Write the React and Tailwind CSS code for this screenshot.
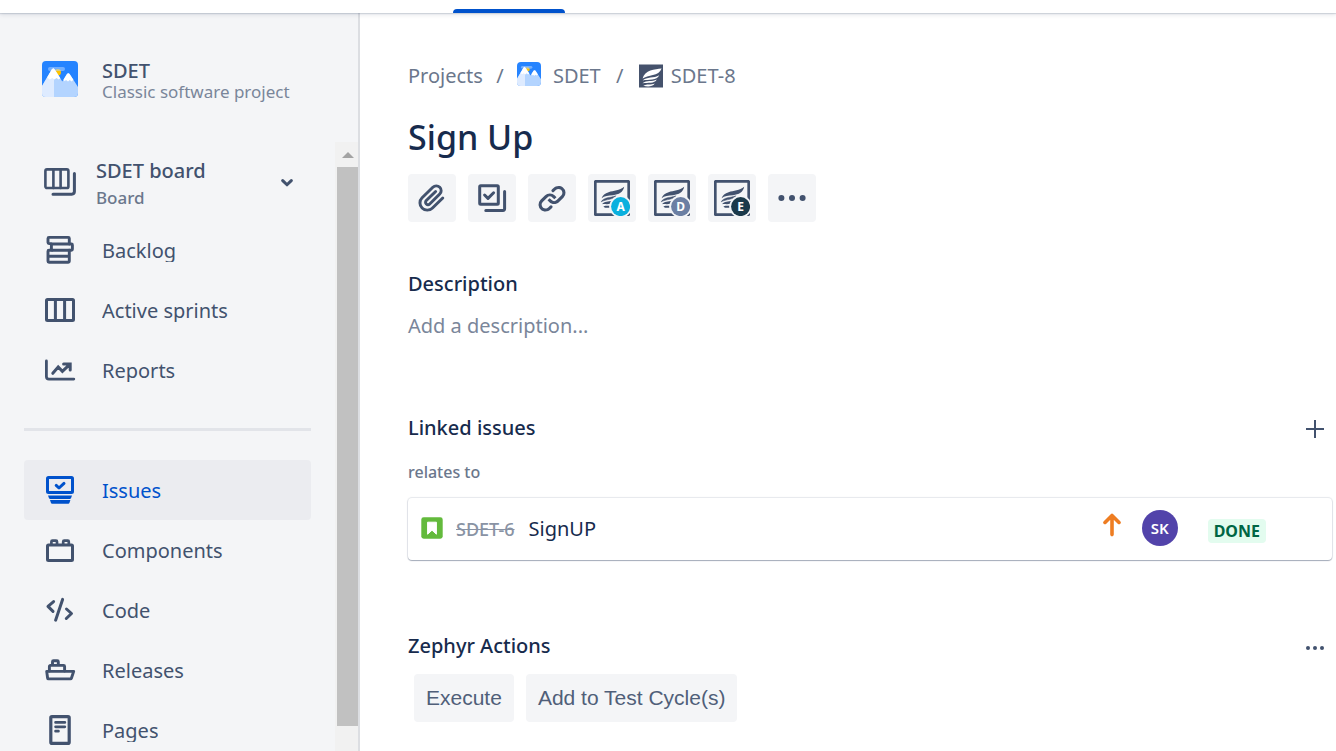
import React from "react";

const strokeProps = {
  fill: "none",
  stroke: "currentColor",
  strokeWidth: 3,
  strokeLinecap: "round",
  strokeLinejoin: "round",
};

function Icon({ children, className = "size-9" }) {
  return (
    <svg viewBox="0 0 36 36" className={`shrink-0 ${className}`} aria-hidden="true" {...strokeProps}>
      {children}
    </svg>
  );
}

function ProjectLogo({ className }) {
  return (
    <svg viewBox="0 0 36 36" className={`shrink-0 ${className}`} aria-hidden="true">
      <rect width="36" height="36" fill="#2684ff" />
      <circle cx="15.8" cy="11.2" r="3.2" fill="#ffc400" />
      <rect x="6" y="6" width="17" height="4" rx="2" fill="#b3d4ff" opacity=".55" />
      <path d="M0 25 9.8 8.6Q11.3 6.4 12.8 8.6L20.3 20.4 24.8 13.2Q26.3 11.2 27.8 13.2L36 26V36H0Z" fill="#b3d4ff" />
      <path d="M0 25 9.8 8.6Q10.5 7.5 12 7.2V36H0Z" fill="#deebff" />
      <path d="M5.2 16.4 9.8 8.6Q11.3 6.4 12.8 8.6L18.4 17.2 16.6 18.6 14.6 17 12.4 18.6 10.2 17 7.8 18.4Z" fill="#fff" />
      <path d="M21.6 18.4 24.8 13.2Q26.3 11.2 27.8 13.2L31.4 18.8 29.6 20.4 27.8 19 26 20.6 24 19 22.6 20.2Z" fill="#fff" />
    </svg>
  );
}

function ZephyrTypeIcon() {
  return (
    <svg viewBox="0 0 24 24" className="size-6 shrink-0" aria-hidden="true">
      <rect y="0.5" width="24" height="23" fill="#45526c" />
      <path d="M22.6 4.4C16 5.4 5.6 5.6 3.6 14.600 8.400 10.600 20 12.400 22.600 4.400Z" fill="#fff" />
      <path d="M3.6 16.400c4-4 11.400-1.800 16.600-5.200-2.200 5.400-10.600 4-16.600 5.200Z" fill="#fff" />
      <path d="M3.400 19.200c4.400-3 9.600-1.200 14.400-3.600-2.400 4.400-8.600 3-14.400 3.600Z" fill="#fff" />
      <path d="M4.200 21.800c3.800-2.200 7.600-.8 11.600-2.400-2.400 3.600-7.200 3.400-11.600 2.400Z" fill="#fff" />
    </svg>
  );
}

function ZephyrBadgeIcon({ letter, color }) {
  return (
    <svg viewBox="0 0 36 36" className="size-9 shrink-0" aria-hidden="true">
      <rect x="1.3" y="1.3" width="33.400" height="33.400" rx="0.6" fill="none" stroke="#42526e" strokeWidth="2.700" />
      <path d="M30.200 6.800C25.600 11 19.600 10.400 14.600 12.200 11 13.400 8.600 15.200 7.600 18.200 10.400 15.800 14.400 15.600 19 15.200 25 14.600 29 12.400 30.200 6.800Z" fill="#42526e" />
      <path d="M7.200 21.800c2.600-4.600 8.600-3.800 14.800-6-2 3.800-9.400 3.200-14.800 6Z" fill="#42526e" stroke="#42526e" strokeWidth=".5" />
      <path d="M8 24.200c2.400-2.800 6-2.600 10.400-3.400l-2.400 3c-2.800.8-5.400 0-8 .4Z" fill="#42526e" />
      <path d="M9.400 26.400c1.800-.8 4-.6 6-.6v1.900c-2.200.2-4.600.3-6-1.300Z" fill="#42526e" />
      <circle cx="26.600" cy="26.600" r="11.200" fill="#f4f5f7" />
      <circle cx="26.600" cy="26.600" r="9.500" fill={color} />
      <text x="26.600" y="30.800" textAnchor="middle" fontSize="12" fontWeight="700" fill="#fff" fontFamily="Noto Sans, sans-serif">
        {letter}
      </text>
    </svg>
  );
}

const icons = {
  board: (
    <Icon>
      <g strokeWidth="2.6">
        <rect x="3.4" y="5.4" width="23" height="18.6" rx="1.6" />
        <path d="M11.4 6v18M18.6 6v18" />
      </g>
      <path d="M11 30.2h18.8a2.6 2.6 0 0 0 2.6-2.6V9.6" strokeWidth="3" />
    </Icon>
  ),
  backlog: (
    <Icon>
      <g strokeWidth="2.9">
        <path d="M9 11.6H7a1 1 0 0 1-1-1V6.4a1 1 0 0 1 1-1h19.300a1 1 0 0 1 1 1V12" />
        <rect x="9.4" y="12" width="21" height="6.300" rx="1" />
        <path d="M10 18.300H7a1 1 0 0 0-1 1v10a1 1 0 0 0 1 1h19.300a1 1 0 0 0 1-1v-11M6 24.200h21" />
      </g>
    </Icon>
  ),
  sprints: (
    <Icon>
      <rect x="4.500" y="7.500" width="27" height="21" rx="1" />
      <path d="M13.400 8v20M22.600 8v20" />
    </Icon>
  ),
  reports: (
    <Icon>
      <path d="M4.400 9v15.500a2.600 2.600 0 0 0 2.600 2.600h24.800" strokeWidth="2.800" />
      <path d="M10.800 21.300 16.200 15l4.200 4.400 7.400-7M21.600 11.900h6.600v6" strokeLinejoin="miter" />
    </Icon>
  ),
  issues: (
    <Icon>
      <rect x="5.500" y="5.500" width="25" height="15" rx="1" />
      <path d="M14.200 13.400 17 16l5-4.600" />
      <path d="M6 23.600h24l-1 2.600q-.4.700-1.200.7H8.200q-.8 0-1.200-.7ZM8 28.100h20.400l-1 2.900q-.3.700-1 .7H10q-.7 0-1-.7Z" fill="currentColor" stroke="none" />
    </Icon>
  ),
  components: (
    <Icon>
      <rect x="5.500" y="13" width="25" height="15.600" rx="1" />
      <path d="M9.400 12.500V9.700a1 1 0 0 1 1-1h3.600a1 1 0 0 1 1 1v2.800M21.200 12.500V9.700a1 1 0 0 1 1-1h3.600a1 1 0 0 1 1 1v2.800" strokeWidth="2.700" />
    </Icon>
  ),
  code: (
    <Icon>
      <path d="M11.600 9.600 6 14.400l5 5M20.600 7.400 13.600 28.200M24.500 17l5 4.500-5.200 5" />
    </Icon>
  ),
  releases: (
    <Icon>
      <path d="M4.700 19.400h27l-2.300 6.800a1 1 0 0 1-1 .7H6.600a1 1 0 0 1-1-.9Z" strokeWidth="2.900" />
      <path d="M7.400 19v-4.600a1 1 0 0 1 1-1h13.200a1 1 0 0 1 1 1V19M10.500 13V9.700a1 1 0 0 1 1-1h3.800a1 1 0 0 1 1 1V13" strokeWidth="2.900" />
    </Icon>
  ),
  pages: (
    <Icon>
      <rect x="8.800" y="4.600" width="18.400" height="26.800" rx="1.200" strokeWidth="3.200" />
      <path d="M13.600 10.400h9.200M13.600 14.800h9.200M13.600 19.200h2.800" strokeWidth="2.800" />
    </Icon>
  ),
};

const boardLinks = [
  { label: "Backlog", icon: "backlog" },
  { label: "Active sprints", icon: "sprints" },
  { label: "Reports", icon: "reports" },
];

const projectLinks = [
  { label: "Issues", icon: "issues", active: true },
  { label: "Components", icon: "components" },
  { label: "Code", icon: "code" },
  { label: "Releases", icon: "releases" },
  { label: "Pages", icon: "pages" },
];

function NavItem({ label, icon, active }) {
  return (
    <a
      href="#"
      aria-current={active ? "page" : undefined}
      className={`flex h-[60px] shrink-0 items-center gap-6 rounded px-[18px] ${
        active ? "bg-[#ebecf0] text-[#0052cc]" : "text-[#42526e]"
      }`}
    >
      {icons[icon]}
      <span className="h-6 overflow-hidden text-[20px] leading-[26px]">{label}</span>
    </a>
  );
}

function Sidebar() {
  return (
    <aside className="flex w-[360px] shrink-0 flex-col border-r-2 border-[#dcdee2] bg-[#f4f5f7]">
      <div className="flex h-[129px] shrink-0 gap-6 px-[42px] pt-12">
        <ProjectLogo className="size-9 rounded" />
        <div className="flex flex-col">
          <span className="text-[20px] leading-5 font-medium text-[#42526e]">SDET</span>
          <span className="text-[17px] leading-[22px] text-[#7a869a]">Classic software project</span>
        </div>
      </div>
      <div className="flex min-h-0 flex-1">
        <nav aria-label="Project" className="flex min-w-0 flex-1 flex-col overflow-hidden pr-6 pl-6">
          <button
            type="button"
            className="flex h-[78px] shrink-0 items-center gap-[18px] px-[18px] pt-0.5 text-left text-[#42526e]"
          >
            {icons.board}
            <span className="flex min-w-0 flex-1 flex-col pt-1">
              <span className="text-[20px] leading-7 font-medium">SDET board</span>
              <span className="text-[17px] leading-[26px] font-medium text-[#6b778c]">Board</span>
            </span>
            <svg viewBox="0 0 12 12" className="size-3 shrink-0" aria-hidden="true" {...strokeProps}>
              <path d="M1.700 4.600 6 8.800l4.300-4.200" />
            </svg>
          </button>
          {boardLinks.map((item) => (
            <NavItem key={item.label} {...item} />
          ))}
          <hr className="mt-7 mb-[29px] shrink-0 border-t-3 border-[#e2e4e9]" />
          {projectLinks.map((item) => (
            <NavItem key={item.label} {...item} />
          ))}
        </nav>
        <div className="flex w-[23px] shrink-0 flex-col bg-[#f1f1f1] pb-[25px] pl-0.5" aria-hidden="true">
          <div className="flex h-[25px] shrink-0 items-center justify-center">
            <svg viewBox="0 0 12 6" className="h-1.5 w-3">
              <path d="M6 0 12 6H0Z" fill="#a3a3a3" />
            </svg>
          </div>
          <div className="flex-1 bg-[#c1c1c1]" />
        </div>
      </div>
    </aside>
  );
}

function ToolButton({ label, children }) {
  return (
    <button
      type="button"
      aria-label={label}
      className="flex size-12 items-center justify-center rounded bg-[#f4f5f7] text-[#42526e]"
    >
      {children}
    </button>
  );
}

function Breadcrumbs() {
  return (
    <nav aria-label="Breadcrumb" className="flex h-8 items-center text-[20px] text-[#6b778c]">
      <a href="#">Projects</a>
      <span className="w-[34px] text-center">/</span>
      <a href="#" className="flex items-center gap-3">
        <ProjectLogo className="mb-1 size-6 rounded" />
        SDET
      </a>
      <span className="w-[38px] text-center">/</span>
      <a href="#" className="flex items-center gap-2">
        <ZephyrTypeIcon />
        SDET-8
      </a>
    </nav>
  );
}

function Toolbar() {
  return (
    <div className="mt-[13px] flex gap-3">
      <ToolButton label="Attach">
        <svg viewBox="0 0 24 24" className="size-9" fill="currentColor" aria-hidden="true">
          <path d="M11.643 17.965c-1.53 1.495-4.016 1.496-5.542.004a3.773 3.773 0 01.002-5.412l7.147-6.985a2.316 2.316 0 013.233-.003c.893.873.895 2.282.004 3.154l-6.703 6.55a.653.653 0 01-.914-.008.62.62 0 01.01-.895l6.229-6.087a.941.941 0 000-1.353.995.995 0 00-1.384 0l-6.23 6.087a2.502 2.502 0 00-.01 3.6 2.653 2.653 0 003.683.009l6.703-6.55a4.15 4.15 0 00-.009-5.858 4.31 4.31 0 00-6.002.005L4.715 11.21a5.633 5.633 0 00-.002 8.108c2.291 2.239 6.018 2.239 8.315-.005l6.84-6.685a.936.936 0 000-1.352.996.996 0 00-1.384 0l-6.841 6.69z" />
        </svg>
      </ToolButton>
      <ToolButton label="Create subtask">
        <Icon>
          <rect x="5.700" y="5.700" width="18.600" height="18.600" rx="1" />
          <path d="M10.600 15 14 18.400l5.600-5.600" />
          <path d="M11.800 30.400h17.200a1.600 1.600 0 0 0 1.600-1.600V11.600" />
        </Icon>
      </ToolButton>
      <ToolButton label="Link issue">
        <svg viewBox="0 0 24 24" className="size-9" fill="currentColor" aria-hidden="true">
          <path d="M12.856 5.457l-.937.92a1.002 1.002 0 000 1.437 1.047 1.047 0 001.463 0l.984-.966c.967-.95 2.542-1.135 3.602-.288a2.54 2.54 0 01.203 3.81l-2.903 2.852a2.646 2.646 0 01-3.696 0l-1.11-1.09L9 13.57l1.108 1.089c1.822 1.788 4.802 1.788 6.622 0l2.905-2.852a4.558 4.558 0 00-.357-6.82c-1.893-1.517-4.695-1.226-6.422.47" />
          <path d="M11.144 19.543l.937-.92a1.002 1.002 0 000-1.437 1.047 1.047 0 00-1.462 0l-.985.966c-.967.95-2.542 1.135-3.602.288a2.54 2.54 0 01-.203-3.81l2.903-2.852a2.646 2.646 0 013.696 0l1.11 1.09L15 11.43l-1.108-1.089c-1.822-1.788-4.802-1.788-6.622 0l-2.905 2.852a4.558 4.558 0 00.357 6.82c1.893 1.517 4.695 1.226 6.422-.47" />
        </svg>
      </ToolButton>
      <ToolButton label="Zephyr attachments">
        <ZephyrBadgeIcon letter="A" color="#0ab0de" />
      </ToolButton>
      <ToolButton label="Zephyr details">
        <ZephyrBadgeIcon letter="D" color="#6b7fa3" />
      </ToolButton>
      <ToolButton label="Zephyr executions">
        <ZephyrBadgeIcon letter="E" color="#1b3a4b" />
      </ToolButton>
      <ToolButton label="More">
        <svg viewBox="0 0 36 36" className="size-9" fill="currentColor" aria-hidden="true">
          <circle cx="7.400" cy="18" r="3" />
          <circle cx="18" cy="18" r="3" />
          <circle cx="28.600" cy="18" r="3" />
        </svg>
      </ToolButton>
    </div>
  );
}

function Heading({ children }) {
  return <h2 className="text-[20px] leading-7 font-medium text-[#172b4d]">{children}</h2>;
}

function LinkedIssue() {
  return (
    <div className="mt-3.5 flex h-[62px] items-center rounded bg-white pr-[66px] pl-3 shadow-[0_1px_1px_rgba(9,30,66,0.3),0_0_1px_1px_rgba(9,30,66,0.1)]">
      <svg viewBox="0 0 24 24" className="mb-0.5 size-6 shrink-0" aria-hidden="true">
        <rect x="1.300" y="1.300" width="21.400" height="21.400" rx="2.400" fill="#63ba3c" />
        <path d="M7.600 6.200h8.800v12L12 14.200l-4.400 4Z" fill="#fff" stroke="#fff" strokeLinejoin="round" />
      </svg>
      <a href="#" className="ml-3 text-[18px] font-medium text-[#8993a4] line-through">
        SDET-6
      </a>
      <a href="#" className="ml-3.5 flex-1 text-[20px] text-[#172b4d]">
        SignUP
      </a>
      <svg viewBox="0 0 20 24" className="mb-2 h-6 w-5 shrink-0 text-[#ee7d22]" aria-label="High priority" role="img" {...strokeProps} strokeWidth="3.600">
        <path d="M10 2.600V21.600M3 9.400l7-7 7 7" />
      </svg>
      <span className="mb-0.5 ml-5 flex size-9 items-center justify-center rounded-full bg-[#5243aa] text-[15px] font-semibold text-white">
        SK
      </span>
      <span className="mt-1 ml-[30px] flex h-6 items-center rounded bg-[#e3fcef] px-1.5 text-[16px] font-bold text-[#006644]">
        DONE
      </span>
    </div>
  );
}

export default function App() {
  return (
    <div className="flex h-screen flex-col overflow-hidden bg-white font-['Noto_Sans',sans-serif]">
      <header className="z-10 flex h-[13px] shrink-0 items-end bg-white pl-[453px] shadow-[0_1px_1px_rgba(9,30,66,0.13),0_2px_4px_rgba(9,30,66,0.1)]">
        <div className="h-1 w-28 rounded-t-sm bg-[#0052cc]" />
      </header>
      <div className="flex min-h-0 flex-1">
        <Sidebar />
        <main className="min-w-0 flex-1 overflow-hidden pt-[47px] pr-1 pl-12">
          <Breadcrumbs />
          <h1 className="mt-[21px] text-[34px] leading-[48px] font-medium text-[#172b4d]">Sign Up</h1>
          <Toolbar />

          <section className="mt-12">
            <Heading>Description</Heading>
            <p className="mt-3.5 text-[20px] leading-7 text-[#7a869a]">Add a description...</p>
          </section>

          <section className="mt-[74px]">
            <div className="flex items-center justify-between pr-2">
              <Heading>Linked issues</Heading>
              <button type="button" aria-label="Link an issue" className="pt-0.5 text-[#42526e]">
                <svg viewBox="0 0 18 18" className="size-[18px]" fill="none" stroke="currentColor" strokeWidth="2" aria-hidden="true">
                  <path d="M9 0v18M0 9h18" />
                </svg>
              </button>
            </div>
            <h3 className="mt-[18px] text-[16px] leading-6 font-medium text-[#6b778c]">relates to</h3>
            <LinkedIssue />
          </section>

          <section className="mt-[72px]">
            <div className="flex items-center justify-between pr-2">
              <Heading>Zephyr Actions</Heading>
              <button type="button" aria-label="More Zephyr actions" className="pt-0.5 text-[#42526e]">
                <svg viewBox="0 0 18 18" className="size-[18px]" fill="currentColor" aria-hidden="true">
                  <circle cx="2" cy="10" r="2" />
                  <circle cx="9" cy="10" r="2" />
                  <circle cx="16" cy="10" r="2" />
                </svg>
              </button>
            </div>
            <div className="mt-3.5 flex gap-3 pl-1.5 font-['Liberation_Sans',sans-serif] text-[21px] text-[#505f79]">
              <button type="button" className="h-12 rounded bg-[#f4f5f7] px-3">Execute</button>
              <button type="button" className="h-12 rounded bg-[#f4f5f7] px-3">Add to Test Cycle(s)</button>
            </div>
          </section>
        </main>
      </div>
    </div>
  );
}
